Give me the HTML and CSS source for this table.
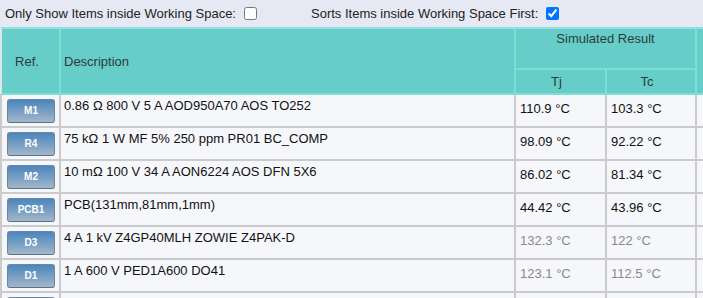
FILE: index.html
```
<!DOCTYPE html>
<html>
<head>
<meta charset="utf-8">
<link rel="stylesheet" href="styles.css">
</head>
<body>
<div class="options">
  <label class="opt">Only Show Items inside Working Space:<input type="checkbox" class="cb"></label>
  <label class="opt opt2">Sorts Items inside Working Space First:<input type="checkbox" class="cb cb2" checked></label>
</div>
<table class="grid">
  <colgroup>
    <col class="c-ref"><col class="c-desc"><col class="c-tj"><col class="c-tc"><col class="c-more">
  </colgroup>
  <thead>
    <tr class="h1">
      <th rowspan="2" class="th-ref first">Ref.</th>
      <th rowspan="2" class="th-desc">Description</th>
      <th colspan="2" class="th-sim">Simulated Result</th>
      <th rowspan="2" class="th-more"></th>
    </tr>
    <tr class="h2">
      <th class="th-sub">Tj</th>
      <th class="th-sub">Tc</th>
    </tr>
  </thead>
  <tbody>
    <tr>
      <td class="ref first"><span class="btn">M1</span></td>
      <td class="desc">0.86 Ω 800 V 5 A AOD950A70 AOS TO252</td>
      <td class="val">110.9 °C</td><td class="val">103.3 °C</td><td class="more"></td>
    </tr>
    <tr>
      <td class="ref first"><span class="btn">R4</span></td>
      <td class="desc">75 kΩ 1 W MF 5% 250 ppm PR01 BC_COMP</td>
      <td class="val">98.09 °C</td><td class="val">92.22 °C</td><td class="more"></td>
    </tr>
    <tr>
      <td class="ref first"><span class="btn">M2</span></td>
      <td class="desc">10 mΩ 100 V 34 A AON6224 AOS DFN 5X6</td>
      <td class="val">86.02 °C</td><td class="val">81.34 °C</td><td class="more"></td>
    </tr>
    <tr>
      <td class="ref first"><span class="btn">PCB1</span></td>
      <td class="desc">PCB(131mm,81mm,1mm)</td>
      <td class="val">44.42 °C</td><td class="val">43.96 °C</td><td class="more"></td>
    </tr>
    <tr>
      <td class="ref first"><span class="btn">D3</span></td>
      <td class="desc">4 A 1 kV Z4GP40MLH ZOWIE Z4PAK-D</td>
      <td class="val dim">132.3 °C</td><td class="val dim">122 °C</td><td class="more"></td>
    </tr>
    <tr>
      <td class="ref first"><span class="btn">D1</span></td>
      <td class="desc">1 A 600 V PED1A600 DO41</td>
      <td class="val dim">123.1 °C</td><td class="val dim">112.5 °C</td><td class="more"></td>
    </tr>
    <tr>
      <td class="ref first"><span class="btn"></span></td>
      <td class="desc"></td>
      <td class="val"></td><td class="val"></td><td class="more"></td>
    </tr>
  </tbody>
</table>
</body>
</html>
```
FILE: styles.css
```
html, body {
  margin: 0;
  padding: 0;
  overflow: hidden;
}
body {
  background: #e6e9f3;
  font-family: "Liberation Sans", Arial, sans-serif;
  font-size: 13px;
  color: #111;
}
.options {
  height: 27px;
  display: flex;
  align-items: center;
  padding-left: 5px;
  color: #222;
}
.opt {
  display: flex;
  align-items: center;
}
.opt2 {
  margin-left: 54px;
}
.cb {
  width: 13px;
  height: 13px;
  margin: 0 0 0 8px;
}
.grid {
  table-layout: fixed;
  border-collapse: separate;
  border-spacing: 0;
  width: 817px;
}
.c-ref { width: 61px; }
.c-desc { width: 455px; }
.c-tj { width: 91px; }
.c-tc { width: 90px; }
.c-more { width: 120px; }

.grid th {
  background: #66cdc9;
  color: #2e3b3b;
  font-weight: normal;
  border-right: 2px solid #80dcd7;
  border-bottom: 2px solid #80dcd7;
  padding: 0;
}
.h1 { height: 43px; }
.h2 { height: 25px; }
.h1 th { border-top: 2px solid #8fe2dd; }
.grid th.first { border-left: 2px solid #dfe5ec; }
.th-ref {
  text-align: center;
  vertical-align: middle;
  padding-right: 7px !important;
}
.th-desc {
  text-align: left;
  vertical-align: middle;
  padding-left: 3px !important;
}
.th-sim {
  text-align: center;
  vertical-align: top;
  padding-top: 2px !important;
}
.th-sub {
  text-align: center;
  vertical-align: middle;
  padding-right: 8px !important;
}

.grid tbody tr { height: 33px; }
.grid td {
  background: #f6f7fb;
  border-right: 2px solid #cbcbcb;
  border-bottom: 2px solid #cbcbcb;
  vertical-align: top;
  padding: 0;
  white-space: nowrap;
  overflow: hidden;
}
.grid td.first { border-left: 2px solid #cbcbcb; }
.ref {
  text-align: center;
  padding-top: 4px !important;
}
.desc {
  padding: 3px 3px 0 !important;
}
.val {
  padding: 6px 4px 0 !important;
}
.dim { color: #8a8a8a; }
.btn {
  display: inline-block;
  vertical-align: top;
  box-sizing: border-box;
  width: 48px;
  height: 24px;
  line-height: 22px;
  border: 1px solid #6b87a1;
  border-bottom-color: #5b7389;
  border-radius: 3px;
  background: linear-gradient(#4b86bc, #7aa0c4 55%, #a3b7c9);
  color: #fff;
  font-size: 10px;
  font-weight: bold;
  text-align: center;
  margin-left: 1px;
}
```
